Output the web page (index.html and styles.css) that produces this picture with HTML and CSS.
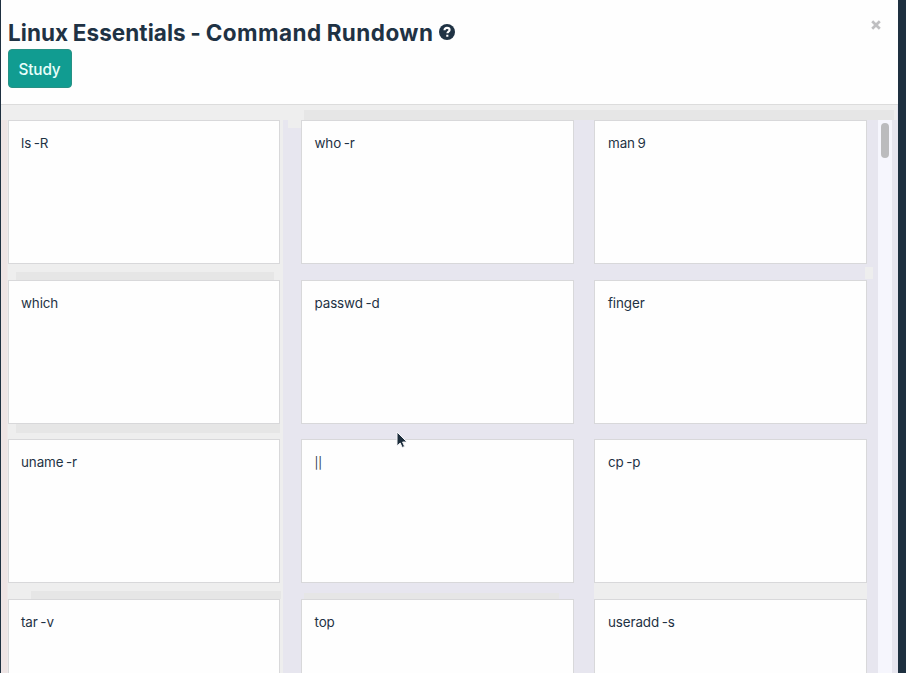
FILE: index.html
```html
<!DOCTYPE html>
<html lang="en">
<head>
<meta charset="utf-8">
<title>Linux Essentials - Command Rundown</title>
<link rel="stylesheet" href="styles.css">
</head>
<body>
<div class="modal">
  <header class="modal-header">
    <div class="heading">
      <h1 class="title">Linux Essentials - <span class="wide">Command Rundown</span></h1>
      <svg class="help" viewBox="0 0 16 16"><circle cx="8" cy="8" r="8"/><path d="M5.5 6.2C5.5 4.7 6.5 3.9 8 3.9s2.6.8 2.6 2.1c0 1.6-2.2 1.7-2.2 3.2M8.3 10.7v2"/></svg>
      <svg class="close" viewBox="0 0 10 10"><path d="M1.2 1.2l7.6 7.6M8.8 1.2L1.2 8.8"/></svg>
    </div>
    <button class="study">Study</button>
  </header>
  <main class="modal-body">
    <div class="cards">
      <div class="card">ls -R</div>
      <div class="card">who -r</div>
      <div class="card">man 9</div>
      <div class="card">which</div>
      <div class="card">passwd -d</div>
      <div class="card">finger</div>
      <div class="card">uname -r</div>
      <div class="card"><span class="pipes">||</span></div>
      <div class="card">cp -p</div>
      <div class="card">tar -v</div>
      <div class="card">top</div>
      <div class="card">useradd -s</div>
    </div>
    <div class="track"><div class="thumb"></div></div>
  </main>
</div>
<svg class="cursor" viewBox="0 0 14 20"><path d="M2 2v14l3.2-3 2 4.5 2.4-1-2-4.5H12z"/></svg>
</body>
</html>
```

FILE: styles.css
```css
* {
  box-sizing: border-box;
}

body {
  margin: 0;
  height: 673px;
  overflow: hidden;
  background: #1e3040;
  color: #1f3244;
  font-family: Inter, "Liberation Sans", sans-serif;
}

.modal {
  display: flex;
  flex-direction: column;
  height: 673px;
  margin: 0 8px 0 1px;
  background: #fefefe;
}

.modal-header {
  flex: none;
  height: 105px;
  padding: 18px 17px 0 7px;
  border-bottom: 1px solid #dcdcdc;
}

.heading {
  display: flex;
  height: 31px;
}

.title {
  flex: none;
  width: 425px;
  margin: 0;
  font-size: 22.5px;
  line-height: 30px;
  font-weight: 700;
  letter-spacing: 0.05px;
  word-spacing: -0.7px;
  white-space: nowrap;
}

.wide {
  letter-spacing: 0.45px;
}

.help {
  width: 16px;
  height: 16px;
  margin: 6px 0 0 6px;
  fill: #1f3244;
}

.help path {
  fill: none;
  stroke: #fff;
  stroke-width: 2.1;
}

.close {
  width: 10px;
  height: 10px;
  margin: 2px 0 0 auto;
  fill: none;
  stroke: #bfbfc1;
  stroke-width: 2.7;
}

.study {
  display: block;
  width: 64px;
  height: 39px;
  padding: 2px 1px 0 0;
  border: 1px solid #279184;
  border-radius: 4px;
  background: #119c91;
  color: #e9fffb;
  font: 500 15.3px/35px Inter, sans-serif;
  letter-spacing: -0.1px;
}

.modal-body {
  display: flex;
  flex: 1;
  min-height: 0;
  overflow: hidden;
  background:
    linear-gradient(#e6e6e6, #e6e6e6) 303px 5px / 590px 10px no-repeat,
    linear-gradient(#eeeeee, #eeeeee) 0 0 / 896px 15px no-repeat,
    linear-gradient(#eeeeee, #eeeeee) 287px 15px / 14px 8px no-repeat,
    linear-gradient(#e6e6e6, #e6e6e6) 15px 167px / 258px 8px no-repeat,
    linear-gradient(#e6e6e6, #e6e6e6) 15px 319px / 264px 9px no-repeat,
    linear-gradient(#e6e6e6, #e6e6e6) 30px 486px / 250px 8px no-repeat,
    linear-gradient(#eeeeee, #eeeeee) 593px 478px / 273px 16px no-repeat,
    linear-gradient(#e6e6e6, #e6e6e6) 303px 488px / 255px 6px no-repeat,
    linear-gradient(#eeeeee, #eeeeee) 864px 162px / 8px 12px no-repeat,
    linear-gradient(90deg, #eee4e4 6px, #eeeeee 7px 282px, #e7e6ef 282px);
}

.cards {
  display: grid;
  flex: none;
  grid-template-columns: 272px 273px 273px;
  grid-template-rows: 144px 144px 144px 74px;
  gap: 15.5px 20.5px;
  width: 859px;
  margin: 15.4px 19px 0 7px;
}

.card {
  padding: 12px 12px 0 13px;
  border: 1px solid #d8d8da;
  background: #fefefe;
  font-size: 13.4px;
  line-height: 20px;
  letter-spacing: -0.1px;
  word-spacing: -1px;
}

.card:nth-child(3n + 1) {
  padding-left: 12px;
}

.card:nth-child(n + 10) {
  border-bottom: 0;
}

.pipes {
  font-size: 11.5px;
}

.track {
  width: 14px;
  flex: none;
  margin: 15px 0 0 -8px;
  padding: 3px 3px 0 3px;
  background: #f6f6fd;
}

.thumb {
  width: 8px;
  height: 35px;
  border-radius: 4px;
  background: #bbbbbd;
}

.cursor {
  position: absolute;
  left: 395px;
  top: 430px;
  width: 14px;
  height: 20px;
  fill: #1c2d3b;
  stroke: #f5f5f8;
  stroke-width: 1;
}
```
